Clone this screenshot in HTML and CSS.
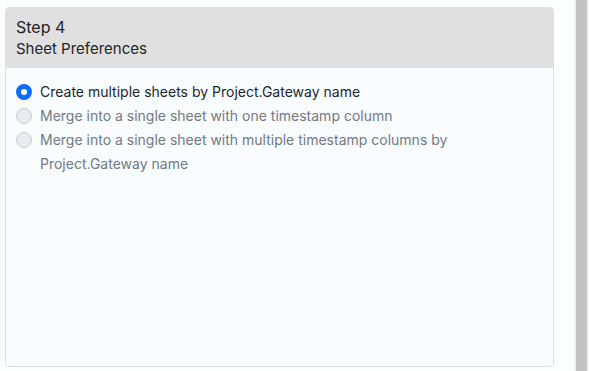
FILE: index.html
```html
<!DOCTYPE html>
<html>
<head>
<meta charset="utf-8">
<link rel="stylesheet" href="styles.css">
</head>
<body>
<div class="page">
  <main class="content">
    <section class="card">
      <header class="card-header">
        <div class="step">Step 4</div>
        <div class="subtitle">Sheet Preferences</div>
      </header>
      <div class="card-body">
        <label class="option">
          <span class="radio checked"></span>
          <span class="label">Create multiple sheets by Project.Gateway name</span>
        </label>
        <label class="option disabled">
          <span class="radio"></span>
          <span class="label">Merge into a single sheet with one timestamp column</span>
        </label>
        <label class="option disabled">
          <span class="radio"></span>
          <span class="label">Merge into a single sheet with multiple timestamp columns by Project.Gateway name</span>
        </label>
      </div>
    </section>
  </main>
  <div class="scrollbar"><div class="thumb"></div></div>
</div>
</body>
</html>
```
FILE: styles.css
```css
html, body {
  margin: 0;
  padding: 0;
  height: 100%;
  overflow: hidden;
}
body {
  background: #fbfeff;
  font-family: Inter, "Noto Sans", sans-serif;
  color: #212529;
}
.page {
  display: flex;
  height: 371px;
}
.content {
  width: 574px;
  padding: 7px 0 0 5px;
  box-sizing: border-box;
}
.card {
  width: 549px;
  height: 360px;
  box-sizing: border-box;
  border: 1px solid #dde1e4;
  border-radius: 4px;
  background: #f9fdff;
  overflow: hidden;
}
.card-header {
  background: #e0e0e0;
  height: 60px;
  box-sizing: border-box;
  padding: 8px 10px 0;
}
.step {
  font-size: 16px;
  line-height: 22px;
}
.subtitle {
  font-size: 15px;
  line-height: 22px;
}
.card-body {
  padding: 12px 10px;
}
.option {
  display: flex;
  align-items: flex-start;
  gap: 8px;
  font-size: 14px;
  line-height: 24px;
}
.option.disabled {
  color: #73797f;
}
.radio {
  flex: none;
  width: 16px;
  height: 16px;
  margin-top: 4px;
  box-sizing: border-box;
  border-radius: 50%;
  border: 1px solid #c9cccf;
  background: #e9ecef;
}
.radio.checked {
  border: 5px solid #0d6efd;
  background: #ffffff;
}
.label {
  max-width: 420px;
}
.scrollbar {
  width: 15px;
  background: #f1f1f1;
  padding: 0 2px;
  box-sizing: border-box;
}
.thumb {
  height: 100%;
  background: #c1c1c1;
}
```
